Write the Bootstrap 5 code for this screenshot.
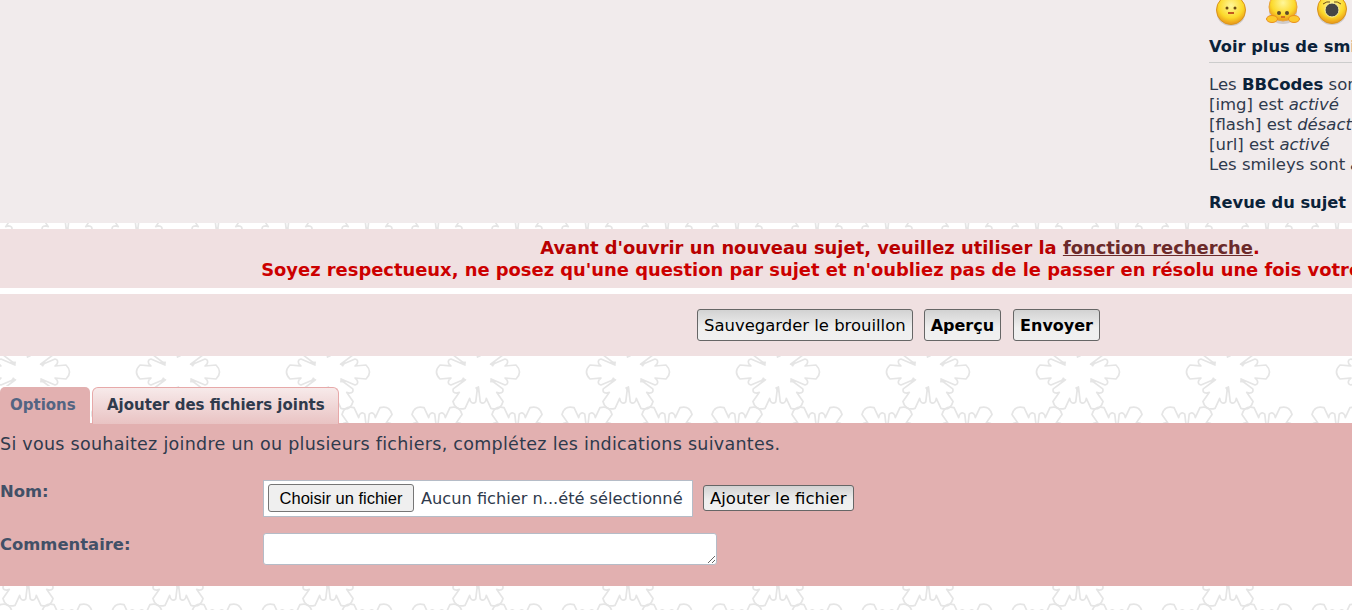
<!DOCTYPE html>
<html lang="fr">
  <head>
    <meta charset="UTF-8" />
    <meta name="viewport" content="width=device-width, initial-scale=1.0" />
    <link
      href="https://cdn.jsdelivr.net/npm/bootstrap@5.3.3/dist/css/bootstrap.min.css"
      rel="stylesheet"
    />
    <title>Poster un message</title>
    <style>
      html, body { height: 610px; overflow: hidden; }
      body {
        font-family: "DejaVu Sans", Verdana, sans-serif;
        font-size: 16.5px;
        line-height: 20px;
        color: #2f3a4c;
        background-color: #fff;
        background-image: url("data:image/svg+xml,%3Csvg xmlns='http://www.w3.org/2000/svg' xmlns:xlink='http://www.w3.org/1999/xlink' width='150' height='197'%3E%3Cdefs%3E%3Cpath id='a' d='M-7 -13L-13 -27Q-12 -31 -8 -29L-6 -27L-7 -38Q0 -45 7 -38L6 -27L8 -29Q12 -31 13 -27L7 -13L9.5 -17L9.56 -12.1'/%3E%3Cg id='f' fill='none' stroke='%23e5e5e5' stroke-width='1.7' stroke-linejoin='round'%3E%3Cuse xlink:href='%23a' transform='rotate(30)'/%3E%3Cuse xlink:href='%23a' transform='rotate(90)'/%3E%3Cuse xlink:href='%23a' transform='rotate(150)'/%3E%3Cuse xlink:href='%23a' transform='rotate(210)'/%3E%3Cuse xlink:href='%23a' transform='rotate(270)'/%3E%3Cuse xlink:href='%23a' transform='rotate(330)'/%3E%3C/g%3E%3C/defs%3E%3Cuse xlink:href='%23f' x='28' y='175'/%3E%3Cuse xlink:href='%23f' x='178' y='175'/%3E%3Cuse xlink:href='%23f' x='28' y='-22'/%3E%3Cuse xlink:href='%23f' x='178' y='-22'/%3E%3Cuse xlink:href='%23f' x='67' y='50'/%3E%3Cuse xlink:href='%23f' x='137' y='50'/%3E%3Cuse xlink:href='%23f' x='-13' y='50'/%3E%3C/svg%3E");
      }
      .page-wrap { width: 1800px; }
      .top-panel { height: 223px; background: #f1ebec; margin-bottom: 6px; padding-left: 1209px; overflow: hidden; }
      .smiley-row { height: 28px; margin-bottom: 8px; gap: 19px; padding-left: 6px; }
      .smiley-row svg { overflow: visible; }
      .side-title { font-weight: 700; font-size: 16.3px; color: #0b2239; line-height: 20px; padding-top: 1px; }
      .side-rule { height: 1px; background: #ccc; margin: 5px 0 12px; width: 143px; }
      .side-title-b { margin-top: 17px; }
      .side-txt strong { color: #0b2239; }
      .notice-band { height: 59px; background: #f0e0e1; margin-bottom: 6px; padding-top: 8px; text-align: center; font-weight: 700; font-size: 17.9px; line-height: 22px; color: #c00; }
      .notice-band a { color: #6b2a2a; }
      .notice-first { color: #b80000; }
      .submit-band { height: 62px; background: #f0e0e1; margin-bottom: 31px; padding: 15px 3px 0 0; gap: 11px; }
      .site-btn { font-family: "DejaVu Sans", Verdana, sans-serif; font-size: 16px; line-height: 20px; height: 32px; padding: 1px 6px 0; color: #000; border: 1px solid #666; border-radius: 3px; background: linear-gradient(#d2d2d2, #efefef 60%, #f0f0f0); }
      .btn-draft { font-size: 16.45px; }
      .btn-send { margin-left: 1px; }
      .tabs-row { height: 36px; gap: 1px; font-size: 15px; font-weight: 700; line-height: 35px; }
      .tab-off { width: 90px; height: 36px; line-height: 36px; background: #e2b0b0; border-radius: 5px 5px 0 0; color: #536482; padding-left: 10px; box-shadow: 1px 0 0 #fff, 0 -1px 0 #fff; }
      .tab-on { width: 247px; margin-left: 1px; height: 37px; border: 1px solid #e7a9a9; border-bottom: 0; border-radius: 6px 6px 0 0; background: linear-gradient(#f7eaea, #e9c3c3); color: #2f3a4c; padding-left: 14px; }
      .attach-panel { height: 163px; background: #e2b0b0; }
      .attach-intro { font-size: 17.5px; letter-spacing: 0.28px; padding-top: 10px; line-height: 22px; margin-bottom: 25px; white-space: nowrap; }
      .field-row { display: flex; }
      .field-lbl { width: 263px; font-weight: 700; font-size: 16.4px; color: #425067; line-height: 22px; padding-top: 1px; }
      .file-box { width: 430px; height: 37px; background: #fff; border: 1px solid #b5bcc7; padding-left: 4px; gap: 7px; font-size: 16.2px; white-space: nowrap; }
      .choose-btn { font-family: "Liberation Sans", Arial, sans-serif; font-size: 16.5px; line-height: 20px; height: 28px; width: 146px; margin-bottom: 2px; padding: 0; color: #000; background: #efefef; border: 1px solid #767676; border-radius: 3px; }
      .add-btn { height: 26px; margin: 5px 0 0 10px; padding: 1px 6px 0; font-size: 16.5px; }
      .comment-box { display: block; width: 454px; height: 32px; background: #fff; border: 1px solid #b5bcc7; border-radius: 3px; padding: 0; }
    </style>
  </head>
  <body>
    <div class="page-wrap">
      <div class="top-panel">
        <div class="d-flex smiley-row">
          <svg width="32" height="28" viewBox="0 0 32 28">
            <defs>
              <radialGradient id="sm" cx="50%" cy="35%" r="60%"><stop offset="0" stop-color="#fff79a" /><stop offset="0.7" stop-color="#fcd92a" /><stop offset="1" stop-color="#eda31c" /></radialGradient>
            </defs>
            <ellipse cx="16" cy="14" rx="14" ry="12" fill="#cfcaca" />
            <circle cx="16" cy="10" r="14.5" fill="url(#sm)" stroke="#d9931e" />
            <circle cx="12" cy="8" r="1.5" fill="#6b4a12" /><circle cx="20" cy="8" r="1.5" fill="#6b4a12" />
            <path d="M13 13h6" stroke="#c2571f" stroke-width="2" />
          </svg>
          <svg width="32" height="28" viewBox="0 0 32 28">
            <ellipse cx="17" cy="12" rx="14" ry="12" fill="#cfcaca" />
            <circle cx="17" cy="7" r="14" fill="url(#sm)" stroke="#e9a23a" />
            <circle cx="13" cy="13" r="2" fill="#5d4a2b" /><circle cx="21" cy="13" r="2" fill="#5d4a2b" />
            <path d="M15 17h4" stroke="#d0701f" stroke-width="2" />
            <ellipse cx="6" cy="19" rx="5.5" ry="3.5" fill="#fcc92c" stroke="#e98f1c" />
            <ellipse cx="28" cy="19" rx="5.5" ry="3.5" fill="#fcc92c" stroke="#e98f1c" />
          </svg>
          <svg width="30" height="28" viewBox="0 0 30 28">
            <ellipse cx="15" cy="13" rx="14" ry="12" fill="#cfcaca" />
            <circle cx="15" cy="9" r="14.5" fill="url(#sm)" stroke="#d9931e" />
            <circle cx="15" cy="10" r="7" fill="#464646" stroke="#fff3a0" />
            <path d="M6 4q4-3 7-2M24 4q-4-3-7-2" stroke="#6b4a12" fill="none" />
          </svg>
        </div>
        <div class="side-title">Voir plus de smileys</div>
        <div class="side-rule"></div>
        <div class="side-txt">
          Les <strong>BBCodes</strong> sont <em>activés</em><br />
          [img] est <em>activé</em><br />
          [flash] est <em>désactivé</em><br />
          [url] est <em>activé</em><br />
          Les smileys sont <em>activés</em>
        </div>
        <div class="side-title side-title-b">Revue du sujet</div>
      </div>

      <div class="notice-band">
        <div class="notice-first">Avant d'ouvrir un nouveau sujet, veuillez utiliser la <a href="#">fonction recherche</a>.</div>
        <div>Soyez respectueux, ne posez qu'une question par sujet et n'oubliez pas de le passer en résolu une fois votre problème résolu.</div>
      </div>

      <div class="submit-band d-flex justify-content-center">
        <button class="site-btn btn-draft" type="button">Sauvegarder le brouillon</button>
        <button class="site-btn fw-bold" type="button">Aperçu</button>
        <button class="site-btn btn-send fw-bold" type="button">Envoyer</button>
      </div>

      <div class="tabs-row d-flex">
        <div class="tab-off">Options</div>
        <div class="tab-on">Ajouter des fichiers joints</div>
      </div>
      <div class="attach-panel">
        <div class="attach-intro">Si vous souhaitez joindre un ou plusieurs fichiers, complétez les indications suivantes.</div>
        <div class="field-row mb-3">
          <label class="field-lbl">Nom:</label>
          <div class="file-box d-flex align-items-center">
            <button class="choose-btn" type="button">Choisir un fichier</button>
            <span>Aucun fichier n...été sélectionné</span>
          </div>
          <button class="site-btn add-btn" type="button">Ajouter le fichier</button>
        </div>
        <div class="field-row">
          <label class="field-lbl">Commentaire:</label>
          <textarea class="comment-box"></textarea>
        </div>
      </div>
    </div>
    <script src="https://cdn.jsdelivr.net/npm/bootstrap@5.3.3/dist/js/bootstrap.bundle.min.js"></script>
  </body>
</html>
